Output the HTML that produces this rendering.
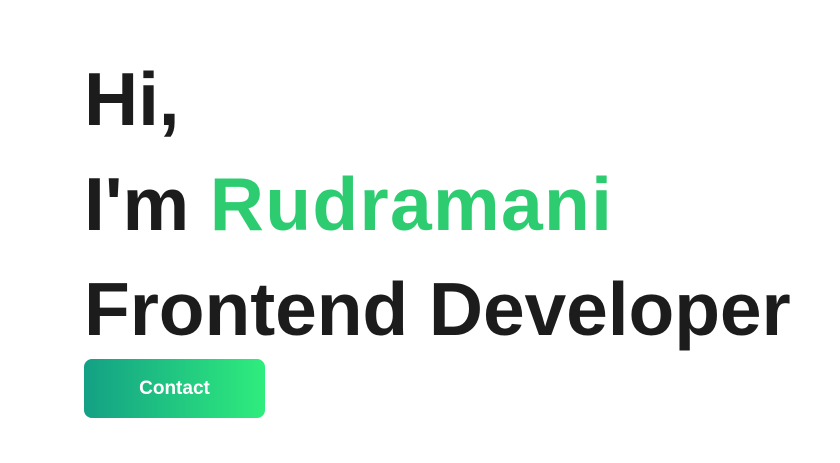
<!DOCTYPE html>
<html><head><meta charset="utf-8"><style>
html,body{margin:0;padding:0;background:#fff;width:840px;height:463px;overflow:hidden}
.t{position:absolute;left:84px;font-family:"Liberation Sans",sans-serif;font-weight:700;font-size:75px;line-height:105px;color:#1c1c1c;white-space:nowrap;letter-spacing:-0.1px}
.g{color:#2ecc71;letter-spacing:1.3px}
.btn{position:absolute;left:84px;top:359px;width:181px;height:59px;border-radius:8px;background:linear-gradient(90deg,#13a085,#2fed7d);color:#fff;font-family:"Liberation Sans",sans-serif;font-weight:700;font-size:19px;display:flex;align-items:center;justify-content:center}
</style></head><body>
<div class="t" style="top:47px">Hi,</div>
<div class="t" style="top:152px">I'm <span class="g">Rudramani</span></div>
<div class="t" style="top:257px">Frontend Developer</div>
<div class="btn">Contact</div>
</body></html>
